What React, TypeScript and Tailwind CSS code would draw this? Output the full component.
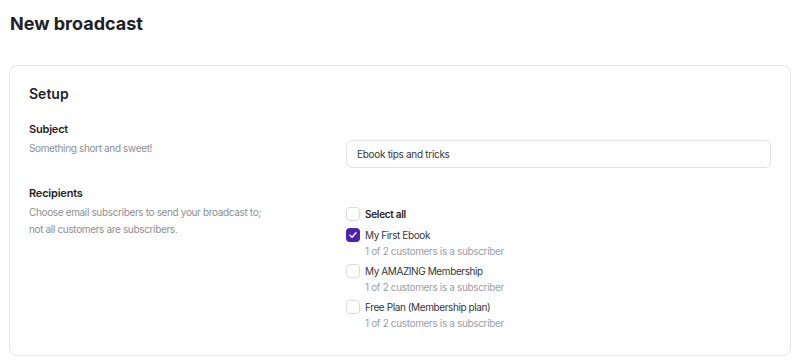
import React from "react";

function Check({ checked }: { checked?: boolean }) {
  if (checked) {
    return (
      <span className="flex h-[14px] w-[14px] shrink-0 items-center justify-center rounded-[4px] bg-[#4c23b0]">
        <svg width="10" height="10" viewBox="0 0 10 10" fill="none">
          <path d="M2 5.2L4.1 7.3L8 2.8" stroke="white" strokeWidth="1.4" strokeLinecap="round" strokeLinejoin="round" />
        </svg>
      </span>
    );
  }
  return <span className="h-[14px] w-[14px] shrink-0 rounded-[4px] border border-[#d9dbde] bg-white" />;
}

function Item({ label, checked }: { label: string; checked?: boolean }) {
  return (
    <div className="flex flex-col">
      <div className="flex items-center gap-[5px]">
        <Check checked={checked} />
        <span className="text-[10px] leading-[16px] tracking-[-0.4px] text-[#33373d]">{label}</span>
      </div>
      <div className="pl-[19px] text-[10px] leading-[16px] tracking-[-0.35px] text-[#9a9ea5]">1 of 2 customers is a subscriber</div>
    </div>
  );
}

export default function App() {
  return (
    <div className="h-[363px] w-[800px] bg-white font-['Inter',sans-serif] antialiased">
      <h1 className="pl-[10px] pt-[13px] text-[18px] font-bold leading-[22px] text-[#1c2128]">New broadcast</h1>
      <div className="mx-[9px] mt-[30px] rounded-[8px] border border-[#e6e7e9] px-[19px] pb-[24px] pt-[18px]">
        <h2 className="text-[14px] font-semibold leading-[20px] text-[#1f2328]">Setup</h2>
        <div className="mt-[17px] flex">
          <div className="w-[317px] shrink-0">
            <div className="text-[11px] font-semibold leading-[16px] tracking-[-0.2px] text-[#1f2328]">Subject</div>
            <div className="mt-[2px] text-[10px] leading-[18px] tracking-[-0.35px] text-[#8b8f96]">Something short and sweet!</div>
          </div>
          <div className="mt-[19px] flex h-[28px] flex-1 items-center rounded-[6px] border border-[#e2e4e7] px-[10px] text-[10px] tracking-[-0.3px] text-[#33373d]">
            Ebook tips and tricks
          </div>
        </div>
        <div className="mt-[17px] flex">
          <div className="w-[317px] shrink-0">
            <div className="text-[11px] font-semibold leading-[16px] tracking-[-0.2px] text-[#1f2328]">Recipients</div>
            <div className="mt-[3px] text-[10px] leading-[17px] tracking-[-0.35px] text-[#8b8f96]">
              Choose email subscribers to send your broadcast to;
              <br />
              not all customers are subscribers.
            </div>
          </div>
          <div className="flex flex-1 flex-col gap-[4px] pt-[21px]">
            <div className="mb-[1px] flex items-center gap-[5px]">
              <Check />
              <span className="text-[10px] font-semibold leading-[16px] tracking-[-0.3px] text-[#1f2328]">Select all</span>
            </div>
            <Item label="My First Ebook" checked />
            <Item label="My AMAZING Membership" />
            <Item label="Free Plan (Membership plan)" />
          </div>
        </div>
      </div>
    </div>
  );
}
